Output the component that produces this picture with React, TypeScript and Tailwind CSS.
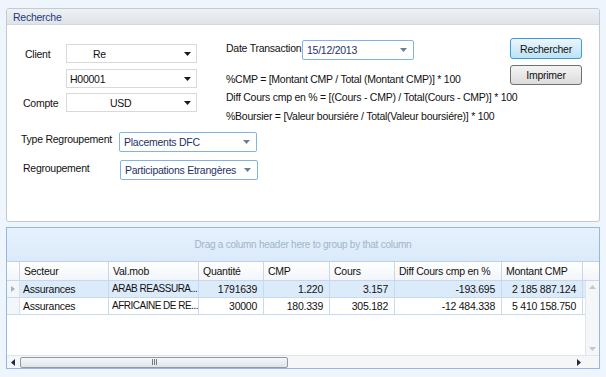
import React from 'react'

const font = { fontFamily: '"Liberation Sans", Arial, sans-serif' }

function Caret({ color = '#1a1a1a' }: { color?: string }) {
  return (
    <svg width="7" height="4" viewBox="0 0 7 4" className="shrink-0">
      <path d="M0 0 L7 0 L3.5 4 Z" fill={color} />
    </svg>
  )
}

function Combo({ value, w, pl }: { value: string; w: string; pl: string }) {
  return (
    <div className={`flex h-[19px] items-center border border-[#d9d9d9] bg-white pr-[5px] ${w}`}>
      <span className={`flex-1 whitespace-nowrap text-[#111] ${pl}`}>{value}</span>
      <Caret />
    </div>
  )
}

function BlueCombo({ value, w }: { value: string; w: string }) {
  return (
    <div className={`flex h-[20px] items-center rounded-[2px] border border-[#7eb4ea] bg-white pl-[4px] pr-[6px] ${w}`}>
      <span className="flex-1 whitespace-nowrap text-[#1b3366]">{value}</span>
      <Caret color="#6b7f99" />
    </div>
  )
}

const cols = [
  { label: 'Secteur', w: 'w-[89px]' },
  { label: 'Val.mob', w: 'w-[90px]' },
  { label: 'Quantité', w: 'w-[65px]' },
  { label: 'CMP', w: 'w-[66px]' },
  { label: 'Cours', w: 'w-[65px]' },
  { label: 'Diff Cours cmp en %', w: 'w-[107px]' },
  { label: 'Montant CMP', w: 'w-[81px]' },
]

const rows = [
  ['Assurances', 'ARAB REASSURA...', '1791639', '1.220', '3.157', '-193.695', '2 185 887.124'],
  ['Assurances', 'AFRICAINE DE RE...', '30000', '180.339', '305.182', '-12 484.338', '5 410 158.750'],
]

export default function App() {
  return (
    <div
      style={font}
      className="h-[377px] w-[606px] overflow-hidden bg-[#eef5fc] pt-[8px] text-[10.5px] leading-[14px] tracking-[-0.25px] text-[#111]"
    >
      {/* Recherche panel */}
      <div className="mx-[6px] h-[214px] overflow-hidden rounded-[3px] border border-[#c6c9cd] bg-white">
        <div className="flex h-[16px] items-center border-b border-[#d3d8de] bg-gradient-to-b from-[#eef1f5] to-[#dfe4ea] pl-[6px] text-[#1f3a7a]">
          Recherche
        </div>
        <div className="flex pt-[13px]">
          {/* left */}
          <div className="mt-[6px] flex flex-col">
            <div className="flex items-center">
              <span className="w-[59px] whitespace-nowrap pl-[18px]">Client</span>
              <Combo value="Re" w="w-[131px]" pl="pl-[26px]" />
            </div>
            <div className="mt-[6px] flex items-center">
              <span className="w-[59px]" />
              <Combo value="H00001" w="w-[131px]" pl="pl-[3px]" />
            </div>
            <div className="mt-[5px] flex items-center">
              <span className="w-[59px] whitespace-nowrap pl-[16px]">Compte</span>
              <Combo value="USD" w="w-[131px]" pl="pl-[43px]" />
            </div>
          </div>
          {/* middle */}
          <div className="ml-[29px] mt-[2px] flex w-[284px] flex-col">
            <div className="flex items-start">
              <span className="w-[76px] whitespace-nowrap pt-[1px]">Date Transaction</span>
              <BlueCombo value="15/12/2013" w="w-[112px]" />
            </div>
            <div className="mt-[12px] whitespace-nowrap">%CMP = [Montant CMP / Total (Montant CMP)] * 100</div>
            <div className="mt-[4px] whitespace-nowrap">Diff Cours cmp en % = [(Cours - CMP) / Total(Cours - CMP)] * 100</div>
            <div className="mt-[5px] whitespace-nowrap">%Boursier = [Valeur boursiére / Total(Valeur boursiére)] * 100</div>
          </div>
          {/* right */}
          <div className="flex flex-col gap-[6px]">
            <button className="h-[21px] w-[72px] rounded-[3px] border border-[#3c9bd8] bg-gradient-to-b from-[#eaf6fd] to-[#bde2f6] text-[#111]">
              Rechercher
            </button>
            <button className="h-[20px] w-[72px] rounded-[3px] border border-[#707070] bg-gradient-to-b from-[#f4f4f4] to-[#dcdcdc] text-[#111]">
              Imprimer
            </button>
          </div>
        </div>
        <div className="mt-[9px] flex items-center">
          <span className="w-[112px] whitespace-nowrap pb-[6px] pl-[14px]">Type Regroupement</span>
          <BlueCombo value="Placements DFC" w="w-[138px]" />
        </div>
        <div className="mt-[8px] flex items-center">
          <span className="w-[113px] whitespace-nowrap pb-[4px] pl-[16px]">Regroupement</span>
          <BlueCombo value="Participations Etrangères" w="w-[138px]" />
        </div>
      </div>

      {/* grid panel */}
      <div className="mx-[6px] mt-[5px] flex h-[142px] flex-col border border-[#94b8e2] bg-white">
        <div className="flex h-[34px] items-center justify-center border-b border-[#b9d1ec] bg-gradient-to-b from-[#e6f1fc] to-[#dbeafa] text-[10px] text-[#9fb5cc]">
          Drag a column header here to group by that column
        </div>
        <div className="flex h-[19px] border-b border-[#c7d8ec] bg-gradient-to-b from-white to-[#f2f6fa]">
          <div className="w-[13px] border-r border-[#c9d7e6]" />
          {cols.map((c) => (
            <div key={c.label} className={`flex items-center whitespace-nowrap border-r border-[#c9d7e6] pl-[4px] ${c.w}`}>
              {c.label}
            </div>
          ))}
        </div>
        <div className="flex flex-1">
          <div className="flex flex-1 flex-col">
            {rows.map((r, i) => (
              <div key={i} className={`flex h-[17px] border-b border-[#c6daf1] ${i === 0 ? 'bg-[#dcebfa]' : 'bg-white'}`}>
                <div className="flex w-[13px] items-center justify-center border-r border-[#d6e2ef] bg-[#f4f7fa]">
                  {i === 0 && (
                    <svg width="4" height="6" viewBox="0 0 4 6">
                      <path d="M0 0 L4 3 L0 6 Z" fill="#9fb3c9" />
                    </svg>
                  )}
                </div>
                {r.map((v, j) => (
                  <div
                    key={j}
                    className={`flex items-center overflow-hidden whitespace-nowrap border-r border-[#c6daf1] ${cols[j].w} ${
                      j === 1 ? 'pl-[3px] text-[10px] tracking-[-0.5px]' : j === 0 ? 'pl-[3px]' : 'justify-end pr-[6px]'
                    }`}
                  >
                    {v}
                  </div>
                ))}
              </div>
            ))}
            <div className="flex-1" />
          </div>
          <div className="flex w-[14px] flex-col items-center justify-between border-l border-[#e2e6ea] bg-[#f5f6f7] py-[4px]">
            <svg width="7" height="4" viewBox="0 0 7 4">
              <path d="M0 4 L7 4 L3.5 0 Z" fill="#c3c8ce" />
            </svg>
            <svg width="7" height="4" viewBox="0 0 7 4">
              <path d="M0 0 L7 0 L3.5 4 Z" fill="#c3c8ce" />
            </svg>
          </div>
        </div>
        <div className="flex h-[13px] items-center border-t border-[#e2e6ea] bg-[#f5f6f7] pl-[4px] pr-[18px]">
          <svg width="4" height="7" viewBox="0 0 4 7">
            <path d="M4 0 L0 3.5 L4 7 Z" fill="#1e2a44" />
          </svg>
          <div className="ml-[5px] flex h-[11px] w-[268px] items-center justify-center rounded-[2px] border border-[#8e9aa8] bg-gradient-to-b from-[#f6f7f8] to-[#dfe3e8]">
            <div className="ml-[1px] flex gap-[1px]">
              <div className="h-[6px] w-[1px] bg-[#707a86]" />
              <div className="h-[6px] w-[1px] bg-[#707a86]" />
              <div className="h-[6px] w-[1px] bg-[#707a86]" />
            </div>
          </div>
          <div className="flex-1" />
          <svg width="4" height="7" viewBox="0 0 4 7">
            <path d="M0 0 L4 3.5 L0 7 Z" fill="#1e2a44" />
          </svg>
        </div>
      </div>
    </div>
  )
}
